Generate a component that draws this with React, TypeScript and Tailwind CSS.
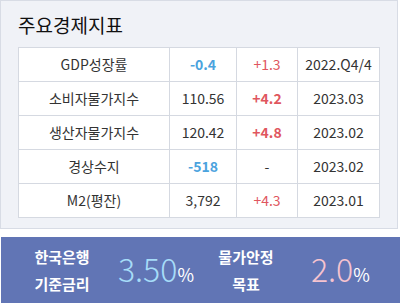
const rows = [
  { name: 'GDP성장률', value: '-0.4', valueCls: 'text-[#4ba3de] font-bold', change: '+1.3', changeCls: 'text-[#e0565e]', date: '2022.Q4/4' },
  { name: '소비자물가지수', value: '110.56', valueCls: 'text-[#333]', change: '+4.2', changeCls: 'text-[#e0565e] font-bold', date: '2023.03' },
  { name: '생산자물가지수', value: '120.42', valueCls: 'text-[#333]', change: '+4.8', changeCls: 'text-[#e0565e] font-bold', date: '2023.02' },
  { name: '경상수지', value: '-518', valueCls: 'text-[#4ba3de] font-bold', change: '-', changeCls: 'text-[#333]', date: '2023.02' },
  { name: 'M2(평잔)', value: '3,792', valueCls: 'text-[#333]', change: '+4.3', changeCls: 'text-[#e0565e]', date: '2023.01' },
];

const App = () => {
  return (
    <div className="w-[400px] h-[303px] bg-white overflow-hidden font-['Noto_Sans_CJK_KR',sans-serif]">
      <section className="w-[398px] border border-[#d8dce5] bg-[#f0f2f7] pt-[10px] pb-[10px] pl-[17px]">
        <h2 className="mb-[8px] h-[28px] text-[19px] leading-[28px] font-normal text-[#111]">주요경제지표</h2>
        <table className="border-collapse bg-white text-[14px] text-[#333]">
          <tbody>
            {rows.map((row) => (
              <tr key={row.name} className="h-[34px]">
                <td className="w-[151px] border border-[#d5d9e1] text-center">{row.name}</td>
                <td className={`w-[67px] border border-[#d5d9e1] text-center ${row.valueCls}`}>{row.value}</td>
                <td className={`w-[61px] border border-[#d5d9e1] text-center ${row.changeCls}`}>{row.change}</td>
                <td className="w-[82px] border border-[#d5d9e1] text-center">{row.date}</td>
              </tr>
            ))}
          </tbody>
        </table>
      </section>
      <section className="mt-[8px] ml-[1px] flex h-[66px] w-[399px] items-center bg-[#6175b5] text-white">
        <div className="ml-[31px] w-[60px] text-center text-[15px] font-bold leading-[27px]">
          <p>한국은행</p>
          <p>기준금리</p>
        </div>
        <div className="ml-[26px] flex items-baseline text-[#a6dcf8]">
          <span className="text-[32px] font-light leading-none">3.50</span>
          <span className="text-[18px] text-white">%</span>
        </div>
        <div className="ml-[22px] w-[60px] text-center text-[15px] font-bold leading-[27px]">
          <p>물가안정</p>
          <p>목표</p>
        </div>
        <div className="ml-[35px] flex items-baseline text-[#f6c3cf]">
          <span className="text-[32px] font-light leading-none">2.0</span>
          <span className="text-[18px] text-white">%</span>
        </div>
      </section>
    </div>
  );
};

export default App;
